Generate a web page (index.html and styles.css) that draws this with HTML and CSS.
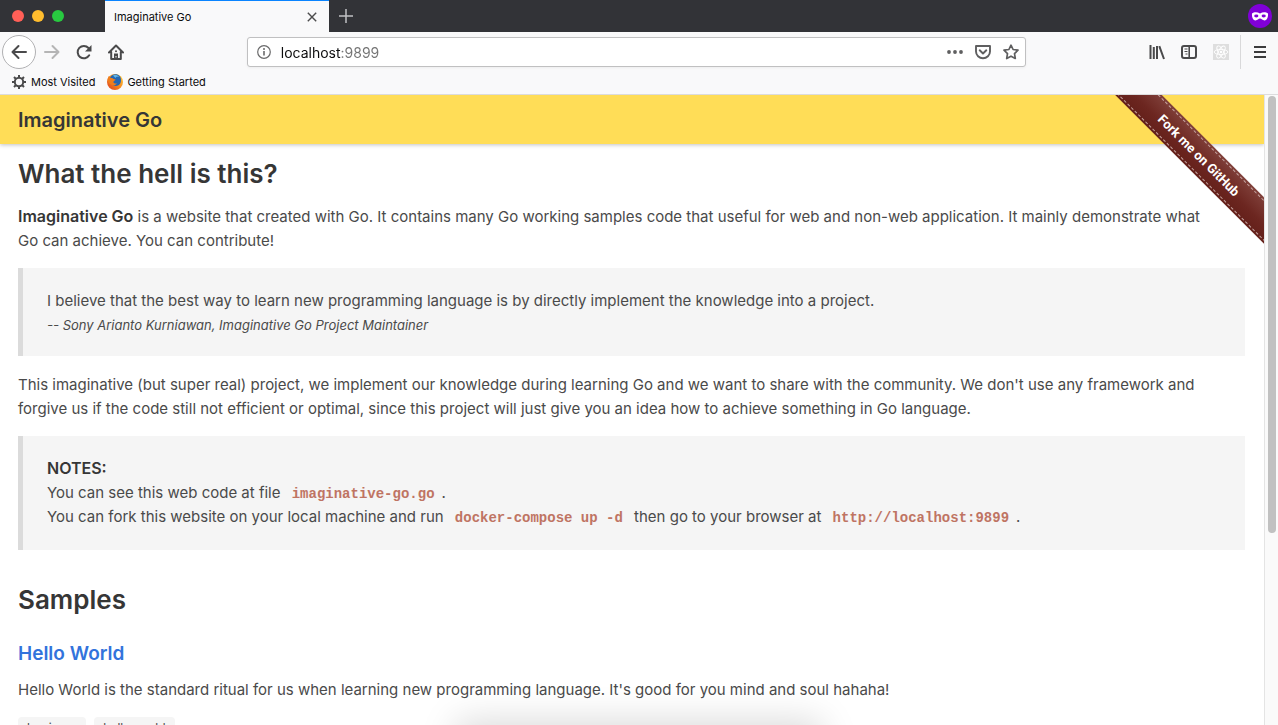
FILE: index.html
```
<!DOCTYPE html>
<html lang="en">
<head>
<meta charset="utf-8">
<title>Imaginative Go</title>
<link rel="stylesheet" href="styles.css">
</head>
<body>
<div class="window">
  <header class="tabstrip">
    <div class="lights">
      <button class="light light-close" aria-label="Close window"></button>
      <button class="light light-min" aria-label="Minimize window"></button>
      <button class="light light-max" aria-label="Zoom window"></button>
    </div>
    <div class="tab">
      <span class="tab-title">Imaginative Go</span>
      <button class="tab-close" aria-label="Close tab"><svg width="10" height="10" viewBox="0 0 10 10"><path d="M.8.8l8.4 8.4M9.2.8L.8 9.2" stroke="#4c4c4d" stroke-width="1.4" fill="none"/></svg></button>
    </div>
    <button class="newtab" aria-label="New tab"><svg width="14" height="14" viewBox="0 0 14 14"><path d="M7 0v14M0 7h14" stroke="#c0c1c3" stroke-width="1.5"/></svg></button>
    <svg class="private" width="24" height="24" viewBox="0 0 24 24"><circle cx="12" cy="12" r="12" fill="#8000d7"/><path d="M4 9.600C6 7.800 9.500 8 12 9.400c2.500-1.400 6-1.600 8 .2.300 3-.7 6.800-3.500 6.800-2 0-3-1.900-4.500-1.900s-2.500 1.900-4.500 1.900C4.700 16.400 3.700 12.600 4 9.600z" fill="#fff"/><ellipse cx="8.300" cy="12" rx="2.100" ry="1.400" fill="#8000d7"/><ellipse cx="15.700" cy="12" rx="2.100" ry="1.400" fill="#8000d7"/></svg>
  </header>

  <nav class="toolbar" aria-label="Navigation">
    <button class="tool back" aria-label="Back"><svg width="16" height="16" viewBox="0 0 16 16"><path d="M15 8H2M7.500 2L1.500 8l6 6" fill="none" stroke="#4a4a4b" stroke-width="2" stroke-linecap="round" stroke-linejoin="round"/></svg></button>
    <button class="tool" aria-label="Forward" disabled><svg width="16" height="16" viewBox="0 0 16 16"><path d="M1 8h13M8.500 2l6 6-6 6" fill="none" stroke="#b5b5b5" stroke-width="2" stroke-linecap="round" stroke-linejoin="round"/></svg></button>
    <button class="tool" aria-label="Reload"><svg width="16" height="16" viewBox="0 0 16 16"><path d="M13.200 11.300A6.200 6.200 0 1 1 12.500 4" fill="none" stroke="#4a4a4b" stroke-width="2" stroke-linecap="round"/><path d="M15.500 1v6.500H9z" fill="#4a4a4b"/></svg></button>
    <button class="tool" aria-label="Home"><svg width="16" height="16" viewBox="0 0 16 16"><path d="M1 8.500L8 1.500l7 7M3.200 8v7h9.600V8" fill="none" stroke="#4a4a4b" stroke-width="2" stroke-linecap="round" stroke-linejoin="round"/><path d="M6 15v-5.500h4V15z" fill="#4a4a4b"/><circle cx="8" cy="7.200" r="1" fill="#4a4a4b"/><path d="M8 12v1.500" stroke="#f9f9fa"/></svg></button>
    <div class="spring"></div>
    <div class="urlbar">
      <svg width="14" height="14" viewBox="0 0 14 14"><circle cx="7" cy="7" r="6.300" fill="none" stroke="#6a6a6b" stroke-width="1.200"/><path d="M7 6v4.500" stroke="#6a6a6b" stroke-width="1.600"/><circle cx="7" cy="4" r="1" fill="#6a6a6b"/></svg>
      <input class="url" type="text" aria-label="Address" value="localhost:9899">
      <button class="url-action" aria-label="Page actions"><svg width="16" height="16" viewBox="0 0 16 16" fill="#5f5f60"><circle cx="2" cy="8" r="1.900"/><circle cx="8" cy="8" r="1.900"/><circle cx="14" cy="8" r="1.900"/></svg></button>
      <button class="url-action" aria-label="Save to Pocket"><svg width="16" height="16" viewBox="0 0 16 16" fill="none" stroke="#5f5f60" stroke-width="1.900" stroke-linecap="round" stroke-linejoin="round"><path d="M1 2h14v5.500a7 6.700 0 0 1-14 0z"/><path d="M4.700 6.300L8 9.500l3.300-3.200"/></svg></button>
      <button class="url-action" aria-label="Bookmark"><svg width="16" height="16" viewBox="0 0 16 16"><path d="M8 1.200l2.100 4.300 4.900.7-3.500 3.400.8 4.900L8 12.200l-4.300 2.300.8-4.900L1 6.200l4.900-.7z" fill="none" stroke="#5f5f60" stroke-width="1.700" stroke-linejoin="round"/></svg></button>
    </div>
    <div class="spring"></div>
    <button class="tool" aria-label="Library"><svg width="16" height="16" viewBox="0 0 16 16" stroke="#4a4a4b" stroke-width="2"><path d="M1.500 1v14M4.800 3v12M8 2v13M10.300 2.200L15 15" fill="none"/></svg></button>
    <button class="tool" aria-label="Sidebars"><svg width="16" height="16" viewBox="0 0 16 16" fill="none" stroke="#4a4a4b"><rect x="1" y="2" width="14" height="12" rx="2" stroke-width="2"/><path d="M8.200 2v12" stroke-width="1.600"/><path d="M3.500 5h3M3.500 7.500h3M4.500 10h2"/></svg></button>
    <button class="tool" aria-label="React" disabled><svg width="16" height="16" viewBox="0 0 16 16"><path d="M0 0h16v16H0z" fill="#dedede"/><g fill="none" stroke="#fff" stroke-width=".9"><ellipse cx="8" cy="8" rx="6.800" ry="2.600"/><ellipse cx="8" cy="8" rx="6.800" ry="2.600" transform="rotate(60 8 8)"/><ellipse cx="8" cy="8" rx="6.800" ry="2.600" transform="rotate(120 8 8)"/></g><circle cx="8" cy="8" r="1.300" fill="#fff"/></svg></button>
    <button class="tool menu" aria-label="Menu"><svg width="12" height="12" viewBox="0 0 12 12"><path d="M0 1h12M0 6h12M0 11h12" stroke="#3c3c3d" stroke-width="2"/></svg></button>
  </nav>

  <nav class="bookmarks" aria-label="Bookmarks">
    <a class="bookmark" href="#visited"><svg width="16" height="16" viewBox="0 0 16 16" fill="none" stroke="#4a4a4b" stroke-width="2"><circle cx="8" cy="8" r="4.200"/><path d="M8 1v3M8 12v3M1 8h3M12 8h3M3 3l2.200 2.200M10.800 10.800L13 13M13 3l-2.200 2.200M5.200 10.800L3 13"/></svg>Most Visited</a>
    <a class="bookmark" href="#started"><svg width="16" height="16" viewBox="0 0 16 16"><defs><linearGradient id="fox" x1="1" y1="0" x2="0" y2="1"><stop offset="0" stop-color="#ffd23c"/><stop offset=".5" stop-color="#f58a1f"/><stop offset="1" stop-color="#dc3a1e"/></linearGradient></defs><circle cx="8" cy="8" r="8" fill="url(#fox)"/><path d="M3 4C4 1.500 6 .3 8.500.3c3.500 0 5.500 2.500 5.500 6C14 9.500 12 12 9 12c-2 0-3.500-1-4-2.500z" fill="#2467b3"/><path d="M6 1.500c2-1 5-.5 6 1.500-2-.5-3 0-3.500 1z" fill="#60b5e8"/><path d="M.8 4.500L1.700 2.200l1.800 1.900c1.500-.3 2.500 0 3 .8l2 .6c-.2 1-1.500 1.300-2 2-.3 1.500 1 2.500 3.500 1.700-1 2-4 2.800-6 1.300C1.500 9.500.3 7 .8 4.500z" fill="#ef7d1c"/></svg>Getting Started</a>
  </nav>

  <div class="viewport">
    <main class="page">
      <div class="navbar"><a class="brand" href="#home">Imaginative Go</a></div>
      <div class="ribbon-corner"><a class="ribbon" href="#fork">Fork me on GitHub</a></div>
      <div class="content">
        <h1 class="title">What the hell is this?</h1>
        <p class="para"><strong>Imaginative Go</strong> is a website that created with Go. It contains many Go working samples code that useful for web and non-web application. It mainly demonstrate what<br>Go can achieve. You can contribute!</p>
        <blockquote class="quote">I believe that the best way to learn new programming language is by directly implement the knowledge into a project.<br><em class="cite">-- Sony Arianto Kurniawan, Imaginative Go Project Maintainer</em></blockquote>
        <p class="para">This imaginative (but super real) project, we implement our knowledge during learning Go and we want to share with the community. We don't use any framework and forgive us if the code still not efficient or optimal, since this project will just give you an idea how to achieve something in Go language.</p>
        <blockquote class="quote notes"><strong>NOTES:</strong><br>You can see this web code at file <code>imaginative-go.go</code>.<br>You can fork this website on your local machine and run <code>docker-compose up -d</code> then go to your browser at <code>http://localhost:9899</code>.</blockquote>
        <h2 class="title samples">Samples</h2>
        <h3 class="sample-name"><a href="#hello">Hello World</a></h3>
        <p class="para">Hello World is the standard ritual for us when learning new programming language. It's good for you mind and soul hahaha!</p>
        <div class="tags"><span class="tag">beginner</span><span class="tag">hello world</span></div>
      </div>
    </main>
    <div class="scrollbar"><div class="thumb"></div></div>
  </div>
  <div class="dock-shadow"></div>
</div>
</body>
</html>
```
FILE: styles.css
```
* { box-sizing: border-box; }
body { margin: 0; font-family: Inter, "Liberation Sans", sans-serif; color: #4a4a4a; background: #fff; }
button { border: 0; padding: 0; background: none; font: inherit; display: flex; align-items: center; justify-content: center; }
a { text-decoration: none; color: inherit; }
.window { position: relative; height: 100vh; display: flex; flex-direction: column; overflow: hidden; }

.tabstrip { flex: none; display: flex; align-items: center; height: 32px; background: #323337; padding-right: 6px; }
.lights { display: flex; gap: 8px; width: 105px; padding-left: 12px; }
.light { width: 12px; height: 12px; border-radius: 50%; }
.light-close { background: #ff5f57; }
.light-min { background: #ffbd2e; }
.light-max { background: #28c940; }
.tab { display: flex; align-items: center; justify-content: space-between; width: 224px; height: 32px; padding: 0 12px 0 9px; background: #f9f9fa; border-top: 1px solid #0a84ff; font-size: 11px; color: #0c0c0d; }
.newtab { width: 34px; height: 32px; }
.private { margin-left: auto; }

.toolbar { flex: none; display: flex; align-items: center; height: 40px; padding: 0 1px 0 2px; background: #f9f9fa; }
.tool { flex: none; width: 32px; height: 34px; }
.back { width: 34px; background: #fff; border: 1px solid #b1b1b3; border-radius: 50%; }
.menu { width: 37px; border-left: 1px solid #d9d9da; margin-left: 3px; padding-left: 2px; }
.spring { flex: 0 0 9%; }
.urlbar { flex: 1; display: flex; align-items: center; height: 30px; padding: 0 0 0 9px; background: #fff; border: 1px solid #c0c0c1; border-radius: 3px; box-shadow: 0 1px 3px #0000000d; }
.url { flex: 1; min-width: 0; margin: 0 8px 0 10px; padding: 0; border: 0; outline: 0; font: 14px Inter, sans-serif; color: transparent; background: linear-gradient(90deg, #0c0c0d 60px, #737373 60px); background-clip: text; -webkit-background-clip: text; }
.url-action { width: 28px; height: 28px; }

.bookmarks { flex: none; display: flex; gap: 12px; height: 23px; padding: 0 11px 3px; align-items: center; background: #f9f9fa; border-bottom: 1px solid #dcdcdd; font-size: 11px; color: #0c0c0d; }
.bookmark { display: flex; align-items: center; gap: 4px; }

.viewport { flex: 1; min-height: 0; display: flex; }
.page { position: relative; flex: 1; min-width: 0; overflow: hidden; }
.navbar { display: flex; align-items: center; height: 49px; padding: 0 18px; background: #ffdd57; box-shadow: 0 1px 4px #0a0a0a40; }
.brand { font-size: 20px; font-weight: 600; color: #363636; }
.ribbon-corner { position: absolute; top: 0; right: 0; width: 149px; height: 149px; overflow: hidden; }
.ribbon { position: absolute; left: -34px; top: 46px; width: 240px; height: 33px; transform: rotate(45deg); display: flex; align-items: center; justify-content: center; padding-right: 6px; background: linear-gradient(#80403a, #6c2620 60%, #64201a); color: #fff; font: bold 13px Roboto, sans-serif; }
.ribbon::after { content: ""; position: absolute; inset: 2px 0; border: 1px dashed #c5a3a0; border-width: 1px 0; }
.content { padding: 12px 19px 0 18px; font-size: 15px; line-height: 24px; }
.title { margin: 0 0 13px; font-size: 26px; line-height: 36px; font-weight: 600; color: #363636; }
.para { margin: 0 0 15px; }
strong { font-size: 16px; line-height: 1; font-weight: 600; color: #363636; }
.quote { margin: 0 0 17px; padding: 21px 24px 19px; border-left: 5px solid #dbdbdb; background: #f5f5f5; }
.notes { padding-bottom: 21px; }
.cite { font-size: 13px; }
code { padding: 4px 7px; background: #f5f5f5; color: #bf7463; font: bold 14px "Liberation Mono", monospace; }
.samples { margin: 32px 0 24px; }
.sample-name { margin: 0 0 12px; font-size: 19px; line-height: 24px; font-weight: 600; color: #3273dc; }
.tags { display: flex; gap: 8px; }
.tag { padding: 0 9px; background: #f5f5f5; border-radius: 4px; font-size: 12px; line-height: 22px; }
.scrollbar { flex: none; width: 14px; padding: 1px 2px 0 3px; background: #fafafa; border-left: 1px solid #e4e4e4; }
.thumb { height: 69.5%; border-radius: 4px; background: #c1c1c1; }
.dock-shadow { position: absolute; left: 36%; right: 36%; top: 100%; height: 60px; box-shadow: 0 0 36px 4px #00000026; pointer-events: none; }
```
